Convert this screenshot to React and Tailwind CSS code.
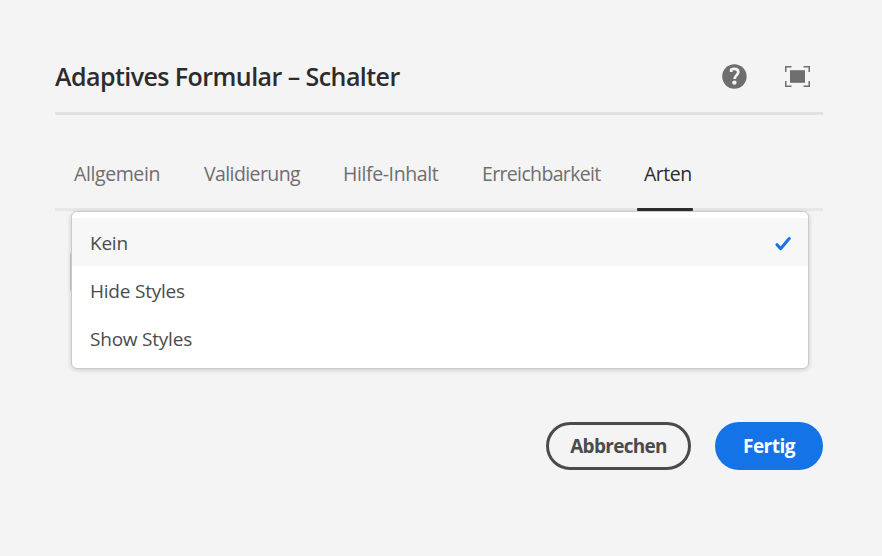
const tabs = [
  { label: 'Allgemein', box: 'w-[86px] mr-[44px]', track: 'tracking-[-0.4px]' },
  { label: 'Validierung', box: 'w-[96px] mr-[43px]', track: 'tracking-[-0.6px]' },
  { label: 'Hilfe-Inhalt', box: 'w-[96px] mr-[43px]', track: 'tracking-[-0.4px]' },
  { label: 'Erreichbarkeit', box: 'w-[119px] mr-[43px]', track: 'tracking-[-0.65px]' },
  { label: 'Arten', box: 'w-[47px]', track: 'tracking-[-0.5px]', active: true },
];

const options = [
  { label: 'Kein', selected: true },
  { label: 'Hide Styles' },
  { label: 'Show Styles' },
];

function HelpIcon() {
  return (
    <svg width="26" height="26" viewBox="0 0 26 26">
      <circle cx="13.400" cy="13.500" r="12.200" fill="#6e6e6e" />
      <path
        d="M10.200 8.900V6.600C11.200 6 12.300 5.800 13.400 5.800c2.400 0 3.900 1.300 3.900 3.300 0 3-3.600 3.200-3.600 6.900"
        fill="none"
        stroke="#f4f4f4"
        strokeWidth="2.700"
      />
      <circle cx="13.400" cy="19.600" r="2.200" fill="#f4f4f4" />
    </svg>
  );
}

function FullscreenIcon() {
  return (
    <svg width="25" height="21" viewBox="0 0 25 21">
      <rect x="5" y="4.200" width="15" height="12.600" fill="#6e6e6e" />
      <path
        d="M.75 6V.75H6.500M18.500 .75H24.250V6M24.250 15V20.250H18.500M6.500 20.250H.75V15"
        fill="none"
        stroke="#6e6e6e"
        strokeWidth="1.500"
      />
    </svg>
  );
}

export default function App() {
  return (
    <div className="h-[556px] w-[882px] overflow-hidden bg-[#f4f4f4] pl-[55px] pr-[59px] pt-[40px] font-['Open_Sans','Noto_Sans',sans-serif] text-[#4b4b4b]">
      <header className="flex h-[75px] items-center border-b-[3px] border-[#e1e1e1]">
        <h1 className="flex-1 whitespace-nowrap text-[25px] font-semibold leading-[34px] tracking-[-0.56px] text-[#2c2c2c]">
          Adaptives Formular – Schalter
        </h1>
        <button className="mr-[38px]"><HelpIcon /></button>
        <button className="mr-[13px]"><FullscreenIcon /></button>
      </header>

      <main className="relative h-[307px]">
        <nav className="flex h-[96px] border-b-[3px] border-[#e8e8e8] pl-[19px]">
          {tabs.map((t) => (
            <div key={t.label} className={`relative h-full pt-[45px] ${t.box}`}>
              <span
                className={`block whitespace-nowrap text-[19.500px] leading-[28px] ${t.track} ${
                  t.active ? 'text-[#2c2c2c]' : 'text-[#6e6e6e]'
                }`}
              >
                {t.label}
              </span>
              {t.active && (
                <span className="absolute -bottom-[3px] -left-[7px] z-10 h-[3px] w-[56px] rounded-[1px] bg-[#2c2c2c]" />
              )}
            </div>
          ))}
        </nav>
        <div className="ml-[15px] mt-[40px] h-[42px] w-[738px] rounded border border-[#c4c4c4] bg-white" />

        <ul className="absolute left-[16px] top-[96px] h-[158px] w-[738px] rounded-[6px] border border-[#cacaca] bg-white pt-[6px] shadow-[0_1px_5px_rgba(0,0,0,0.18)]">
          {options.map((o) => (
            <li
              key={o.label}
              className={`flex h-[48px] items-center justify-between pl-[18px] pr-[17px] pt-[2px] text-[19px] tracking-[-0.22px] ${
                o.selected ? 'bg-[#f7f7f7]' : ''
              }`}
            >
              <span className="whitespace-nowrap">{o.label}</span>
              {o.selected && (
                <svg width="16" height="15" viewBox="0 0 16 15">
                  <path
                    d="M2 8.700 5.700 12.700 14.200 2.500"
                    fill="none"
                    stroke="#1473e6"
                    strokeWidth="3"
                    strokeLinecap="round"
                    strokeLinejoin="round"
                  />
                </svg>
              )}
            </li>
          ))}
        </ul>
      </main>

      <footer className="flex justify-end gap-6 text-[19px] font-bold">
        <button className="h-[48px] w-[145px] rounded-full border-[3px] border-[#4b4b4b] tracking-[-0.7px]">
          Abbrechen
        </button>
        <button className="h-[48px] w-[108px] rounded-full bg-[#1473e6] tracking-[-0.5px] text-white">
          Fertig
        </button>
      </footer>
    </div>
  );
}
